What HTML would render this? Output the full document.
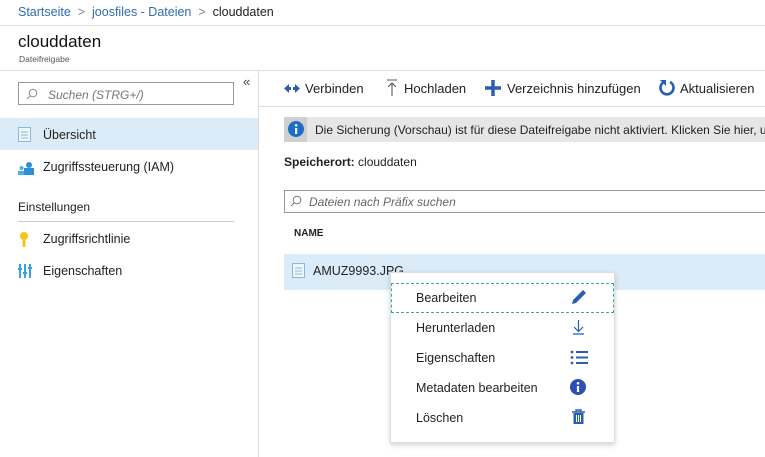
<!DOCTYPE html>
<html><head><meta charset="utf-8"><style>
*{margin:0;padding:0;box-sizing:border-box}
body{width:765px;height:457px;overflow:hidden;background:#fff;font-family:"Liberation Sans",sans-serif;color:#222;position:relative;font-size:12.5px}
.a{position:absolute;white-space:nowrap}
.bl{color:#2f6cb5}
</style></head><body>
<div class="a" style="left:0;top:0;width:765px;height:26px;border-bottom:1px solid #ddd"></div>
<div class="a" style="left:18px;top:5px;font-size:12.5px"><span class="bl">Startseite</span> <span style="color:#888">&nbsp;&gt;&nbsp;</span> <span class="bl">joosfiles - Dateien</span> <span style="color:#888">&nbsp;&gt;&nbsp;</span> clouddaten</div>
<div class="a" style="left:18px;top:32px;font-size:17px;color:#111">clouddaten</div>
<div class="a" style="left:19px;top:54px;font-size:8.5px;color:#555">Dateifreigabe</div>
<div class="a" style="left:0;top:70px;width:765px;border-top:1px solid #ddd"></div>
<div class="a" style="left:258px;top:70px;height:387px;border-left:1px solid #ddd"></div>
<div class="a" style="left:243px;top:74px;font-size:13px;color:#444">«</div>
<div class="a" style="left:18px;top:82px;width:216px;height:23px;border:1px solid #999"></div>
<svg class="a" style="left:26px;top:88px" width="12" height="12"><circle cx="7" cy="5" r="3.8" fill="none" stroke="#888" stroke-width="1"/><line x1="4.3" y1="7.8" x2="1" y2="11" stroke="#888"/></svg>
<div class="a" style="left:48px;top:88px;font-style:italic;color:#777;font-size:12px">Suchen (STRG+/)</div>
<div class="a" style="left:0;top:118px;width:258px;height:32px;background:#dcebf8"></div>
<svg class="a" style="left:18px;top:127px" width="13" height="15"><rect x="0.5" y="0.5" width="12" height="14" fill="#eef5fb" stroke="#8fb6d8"/><path d="M3 5h7M3 8h7M3 11h7" stroke="#8fb6d8"/></svg>
<div class="a" style="left:43px;top:128px">Übersicht</div>
<svg class="a" style="left:18px;top:161px" width="16" height="14"><circle cx="11" cy="4" r="3" fill="#2a8fd6"/><rect x="6" y="7" width="10" height="7" fill="#2a8fd6"/><circle cx="3.5" cy="7" r="2" fill="#4cb0e8"/><rect x="0" y="10" width="6" height="4" fill="#4cb0e8"/></svg>
<div class="a" style="left:43px;top:160px">Zugriffssteuerung (IAM)</div>
<div class="a" style="left:18px;top:200px;font-size:12px">Einstellungen</div>
<div class="a" style="left:18px;top:221px;width:216px;border-top:1px solid #ccc"></div>
<svg class="a" style="left:19px;top:232px" width="10" height="15"><circle cx="5" cy="4" r="4" fill="#f5c518"/><rect x="3.5" y="7" width="3" height="8" fill="#f5c518"/></svg>
<div class="a" style="left:43px;top:232px">Zugriffsrichtlinie</div>
<svg class="a" style="left:18px;top:264px" width="14" height="14"><path d="M2 0v14M7 0v14M12 0v14" stroke="#3aa0e0" stroke-width="2"/><path d="M0 5h4M5 9h4M10 4h4" stroke="#3aa0e0" stroke-width="2"/></svg>
<div class="a" style="left:43px;top:264px">Eigenschaften</div>
<div class="a" style="left:259px;top:106px;width:506px;border-top:1px solid #ddd"></div>
<svg class="a" style="left:284px;top:83px" width="16" height="11"><path d="M0 5.5L5 1v3h2v3H5v3z M16 5.5L11 1v3H9v3h2v3z" fill="#2a5fb0"/></svg>
<div class="a" style="left:305px;top:81px;font-size:13px">Verbinden</div>
<svg class="a" style="left:385px;top:79px" width="14" height="17"><path d="M2 1h10M7 4v13M3 8l4-4 4 4" stroke="#555" fill="none" stroke-width="1.1"/></svg>
<div class="a" style="left:404px;top:81px;font-size:13px">Hochladen</div>
<svg class="a" style="left:485px;top:80px" width="16" height="16"><path d="M8 0v16M0 8h16" stroke="#2a5fb0" stroke-width="3.5"/></svg>
<div class="a" style="left:507px;top:81px;font-size:13px">Verzeichnis hinzufügen</div>
<svg class="a" style="left:658px;top:79px" width="17" height="17"><path d="M6 3A6.5 6.5 0 1 0 12 3" stroke="#2a5fb0" stroke-width="2.6" fill="none"/><path d="M2 1h6v6z" fill="#2a5fb0"/></svg>
<div class="a" style="left:680px;top:81px;font-size:13px">Aktualisieren</div>
<div class="a" style="left:284px;top:117px;width:481px;height:25px;background:#e6e6e6"></div>
<div class="a" style="left:284px;top:117px;width:23px;height:25px;background:#cfcfcf"></div>
<svg class="a" style="left:288px;top:121px" width="16" height="16"><circle cx="8" cy="8" r="8" fill="#1a6fc4"/><rect x="7" y="7" width="2.2" height="6" fill="#fff"/><circle cx="8.1" cy="4.3" r="1.3" fill="#fff"/></svg>
<div class="a" style="left:315px;top:123px;font-size:12px">Die Sicherung (Vorschau) ist für diese Dateifreigabe nicht aktiviert. Klicken Sie hier, um</div>
<div class="a" style="left:284px;top:155px;font-size:12px"><b>Speicherort:</b> clouddaten</div>
<div class="a" style="left:284px;top:190px;width:490px;height:23px;border:1px solid #999"></div>
<svg class="a" style="left:290px;top:195px" width="12" height="12"><circle cx="7" cy="5" r="3.8" fill="none" stroke="#777"/><line x1="4.3" y1="7.8" x2="1" y2="11" stroke="#777"/></svg>
<div class="a" style="left:309px;top:195px;font-style:italic;color:#666;font-size:12px">Dateien nach Präfix suchen</div>
<div class="a" style="left:294px;top:228px;font-size:10px;font-weight:bold">NAME</div>
<div class="a" style="left:284px;top:254px;width:481px;height:36px;background:#dcebf8"></div>
<svg class="a" style="left:292px;top:263px" width="13" height="15"><rect x="0.5" y="0.5" width="12" height="14" fill="#eef5fb" stroke="#8fb6d8"/><path d="M3 5h7M3 8h7M3 11h7" stroke="#8fb6d8"/></svg>
<div class="a" style="left:313px;top:264px;font-size:12.5px">AMUZ9993.JPG</div>
<div class="a" style="left:390px;top:272px;width:225px;height:171px;background:#fff;border:1px solid #ddd;box-shadow:0 2px 5px rgba(0,0,0,.18)"></div>
<div class="a" style="left:391px;top:283px;width:223px;height:30px;border:1px dashed #3aa"></div>
<div class="a" style="left:416px;top:291px;font-size:12.5px">Bearbeiten</div>
<div class="a" style="left:416px;top:321px;font-size:12.5px">Herunterladen</div>
<div class="a" style="left:416px;top:351px;font-size:12.5px">Eigenschaften</div>
<div class="a" style="left:416px;top:381px;font-size:12.5px">Metadaten bearbeiten</div>
<div class="a" style="left:416px;top:411px;font-size:12.5px">Löschen</div>
<svg class="a" style="left:570px;top:289px" width="18" height="16"><path d="M2 15l1-4L13 1l3 3L6 14z" fill="#2a5fb0"/></svg>
<svg class="a" style="left:572px;top:319px" width="13" height="16"><path d="M6.5 1v11M2 8l4.5 4.5L11 8M1 15h11" stroke="#2a5fb0" fill="none" stroke-width="1.2"/></svg>
<svg class="a" style="left:570px;top:350px" width="18" height="15"><path d="M6 2h12M6 7.5h12M6 13h12" stroke="#2a5fb0" stroke-width="2"/><circle cx="2" cy="2" r="1.4" fill="#2a5fb0"/><circle cx="2" cy="7.5" r="1.4" fill="#2a5fb0"/><circle cx="2" cy="13" r="1.4" fill="#2a5fb0"/></svg>
<svg class="a" style="left:570px;top:379px" width="16" height="16"><circle cx="8" cy="8" r="8" fill="#2a4fb8"/><rect x="6.9" y="7" width="2.2" height="6" fill="#fff"/><circle cx="8" cy="4.3" r="1.3" fill="#fff"/></svg>
<svg class="a" style="left:572px;top:409px" width="13" height="15"><path d="M0 3h13M4 3V1h5v2" stroke="#2a5fb0" fill="none" stroke-width="1.4"/><rect x="1.5" y="4" width="10" height="11" fill="#2a5fb0"/><path d="M4.5 6v7M6.5 6v7M8.5 6v7" stroke="#fff"/></svg>
</body></html>
